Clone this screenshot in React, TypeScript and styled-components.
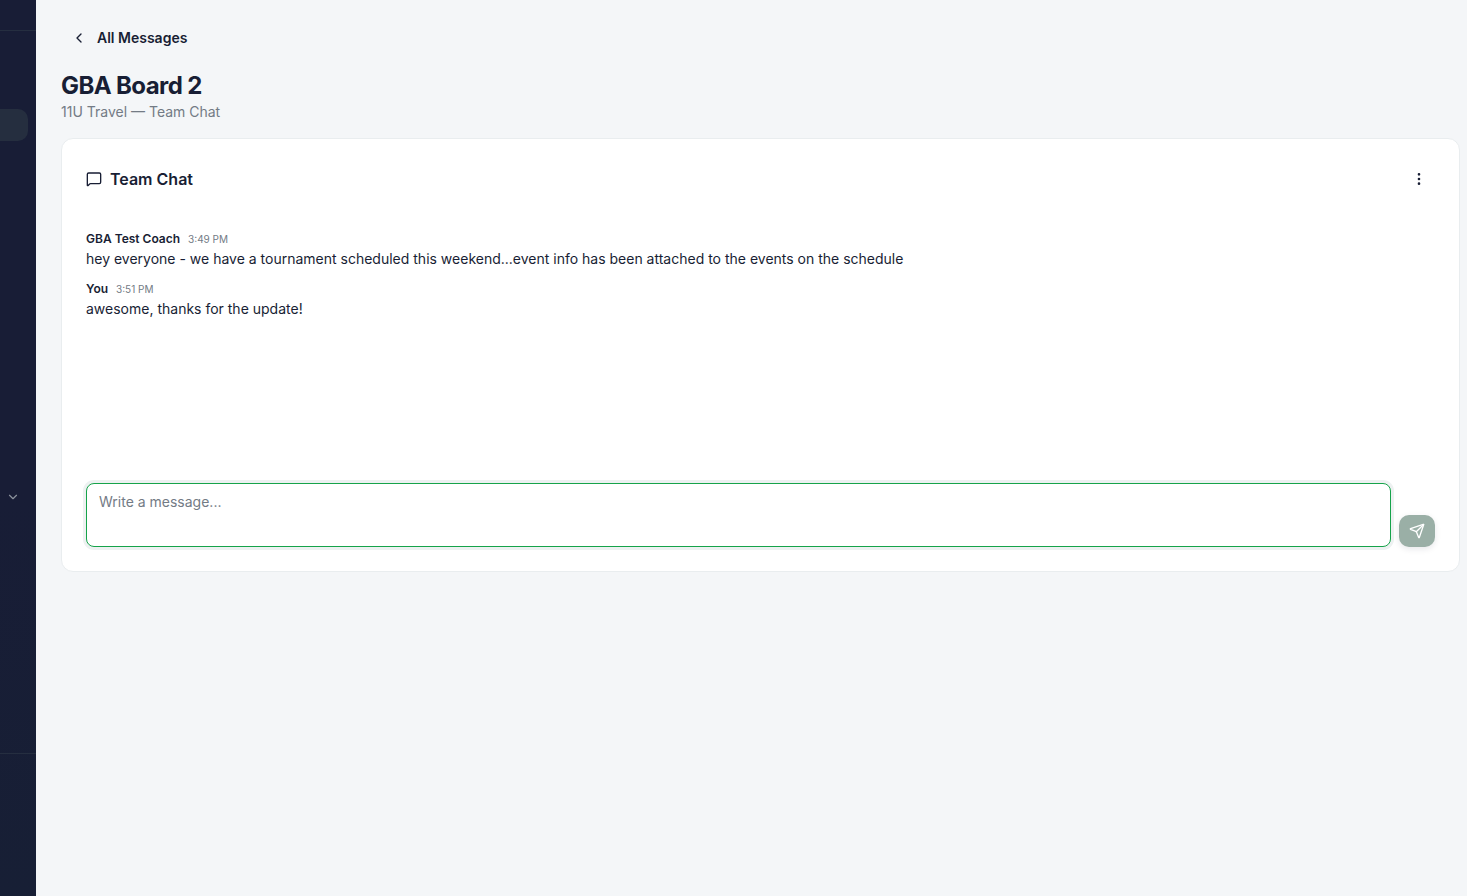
import React from "react";
import styled, { createGlobalStyle } from "styled-components";
import { ChevronDown, ChevronLeft, EllipsisVertical, MessageSquare, Send } from "lucide-react";

const GlobalStyle = createGlobalStyle`
  *, *::before, *::after { box-sizing: border-box; }
  body {
    margin: 0;
    background: #f4f6f8;
    color: #181e34;
    font-family: Inter, "Liberation Sans", sans-serif;
    font-size: 14px;
    line-height: 20px;
    -webkit-font-smoothing: antialiased;
  }
  h1, h2, p { margin: 0; }
  button, textarea { font: inherit; color: inherit; }
`;

const Shell = styled.div`
  display: flex;
  min-height: 100vh;
`;

const Sidebar = styled.aside`
  display: flex;
  flex-direction: column;
  flex: 0 0 36px;
  background: linear-gradient(#181d36 55%, #171f35);
`;

const SidebarHeader = styled.div`
  height: 31px;
  border-bottom: 1px solid #252e40;
`;

const SidebarNav = styled.nav`
  display: flex;
  flex: 1;
  flex-direction: column;
  justify-content: space-between;
  padding: 78px 8px 248px 0;
`;

const ActiveLink = styled.a`
  display: block;
  height: 32px;
  border-radius: 0 10px 10px 0;
  background: #252e3f;
`;

const GroupToggle = styled.button`
  display: flex;
  align-items: center;
  justify-content: flex-end;
  height: 16px;
  padding: 0 8px 0 0;
  border: 0;
  background: none;
  color: #8b929c;
`;

const SidebarFooter = styled.div`
  height: 143px;
  border-top: 1px solid #252e40;
`;

const Main = styled.main`
  flex: 1;
  min-width: 0;
  padding: 22px 7px 24px 25px;
`;

const BackLink = styled.a`
  display: inline-flex;
  align-items: center;
  gap: 10px;
  height: 32px;
  padding: 0 10px;
  color: inherit;
  font-weight: 600;
  text-decoration: none;
`;

const PageHeader = styled.header`
  padding: 16px 0;
`;

const Title = styled.h1`
  font-size: 24px;
  line-height: 32px;
  font-weight: 700;
  letter-spacing: -0.025em;
`;

const Subtitle = styled.p`
  color: #737b85;
`;

const Card = styled.section`
  display: flex;
  flex-direction: column;
  padding: 24px;
  border: 1px solid #e9edef;
  border-radius: 12px;
  background: #fff;
`;

const CardHeader = styled.div`
  display: flex;
  align-items: center;
  justify-content: space-between;
  height: 32px;
`;

const CardTitle = styled.h2`
  display: flex;
  align-items: center;
  gap: 8px;
  font-size: 16px;
  line-height: 24px;
  font-weight: 600;
`;

const MenuButton = styled.button`
  display: grid;
  place-items: center;
  width: 32px;
  height: 32px;
  padding: 0;
  border: 0;
  background: none;
`;

const Messages = styled.div`
  display: flex;
  flex-direction: column;
  gap: 10px;
  min-height: 288px;
  padding-top: 34px;
`;

const MessageMeta = styled.div`
  display: flex;
  align-items: center;
  gap: 8px;
`;

const Author = styled.span`
  font-size: 12px;
  font-weight: 600;
`;

const Time = styled.time`
  color: #737b85;
  font-size: 10px;
`;

const Composer = styled.form`
  display: flex;
  align-items: flex-end;
  gap: 8px;
`;

const MessageInput = styled.textarea`
  flex: 1;
  min-width: 0;
  height: 64px;
  padding: 8px 12px;
  border: 1px solid #16a34a;
  border-radius: 8px;
  outline: none;
  background: #fff;
  box-shadow: 0 0 0 3px #edf1f1;
  resize: none;
  &::placeholder { color: #737b85; opacity: 1; }
`;

const SendButton = styled.button`
  display: grid;
  place-items: center;
  width: 36px;
  height: 32px;
  padding: 0;
  border: 0;
  border-radius: 10px;
  background: #9aafa6;
  color: #fff;
  box-shadow: 0 2px 6px rgba(24, 30, 52, 0.1);
`;

const messages = [
  {
    author: "GBA Test Coach",
    time: "3:49 PM",
    text: "hey everyone - we have a tournament scheduled this weekend...event info has been attached to the events on the schedule",
  },
  { author: "You", time: "3:51 PM", text: "awesome, thanks for the update!" },
];

export default function App() {
  return (
    <>
      <GlobalStyle />
      <Shell>
        <Sidebar>
          <SidebarHeader />
          <SidebarNav aria-label="Main">
            <ActiveLink href="#messages" aria-label="Messages" aria-current="page" />
            <GroupToggle type="button" aria-label="Expand group">
              <ChevronDown size={14} />
            </GroupToggle>
          </SidebarNav>
          <SidebarFooter />
        </Sidebar>
        <Main>
          <BackLink href="#all">
            <ChevronLeft size={16} />
            All Messages
          </BackLink>
          <PageHeader>
            <Title>GBA Board 2</Title>
            <Subtitle>11U Travel — Team Chat</Subtitle>
          </PageHeader>
          <Card>
            <CardHeader>
              <CardTitle>
                <MessageSquare size={16} />
                Team Chat
              </CardTitle>
              <MenuButton type="button" aria-label="Chat options">
                <EllipsisVertical size={16} />
              </MenuButton>
            </CardHeader>
            <Messages>
              {messages.map((message) => (
                <article key={message.time}>
                  <MessageMeta>
                    <Author>{message.author}</Author>
                    <Time>{message.time}</Time>
                  </MessageMeta>
                  <p>{message.text}</p>
                </article>
              ))}
            </Messages>
            <Composer onSubmit={(event) => event.preventDefault()}>
              <MessageInput aria-label="Message" placeholder="Write a message..." />
              <SendButton type="submit" aria-label="Send message">
                <Send size={16} />
              </SendButton>
            </Composer>
          </Card>
        </Main>
      </Shell>
    </>
  );
}
